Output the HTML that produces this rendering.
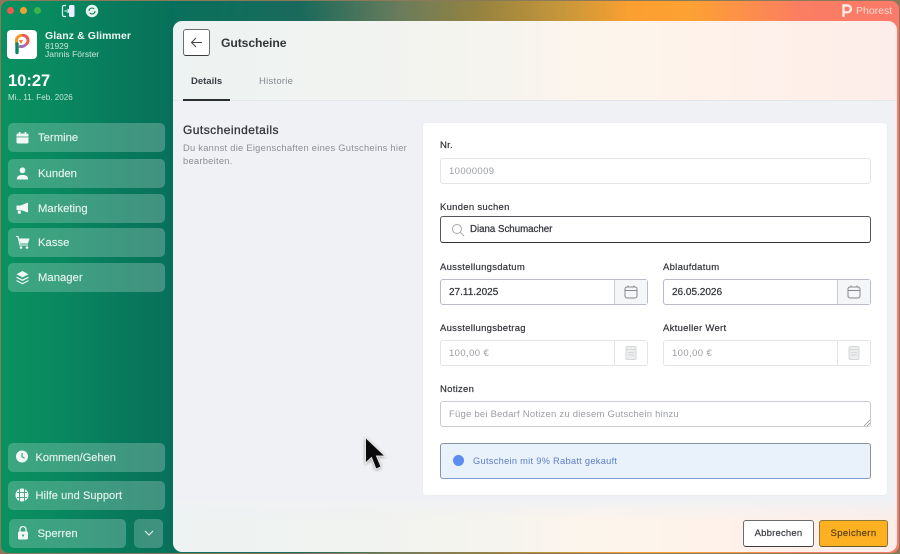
<!DOCTYPE html>
<html lang="de"><head><meta charset="utf-8"><title>Gutscheine</title>
<style>
*{box-sizing:border-box;margin:0;padding:0}
html,body{width:900px;height:554px;overflow:hidden;background:#8a7a5a}
body{font-family:"Liberation Sans",sans-serif;position:relative}
#all{position:absolute;left:0;top:0;width:900px;height:554px;filter:blur(.3px)}
.a{position:absolute;white-space:nowrap}
#win{position:absolute;left:1px;top:1px;width:898px;height:552px;border-radius:8px;overflow:hidden;background:linear-gradient(90deg,#08705c 0,#08705c 172px,#1a6a5c 300px,#6b7c5c 400px,#96833f 480px,#c9973a 565px,#fba030 630px,#fca133 690px,#fb7d62 800px,#fb7a6a 898px)}
#side{position:absolute;left:0;top:0;width:172px;height:552px;background:linear-gradient(90deg,#0a9160 0,#09885f 60px,#087a5c 120px,#08705a 172px)}
.nav{position:absolute;left:7px;width:157px;height:29px;border-radius:5px;background:linear-gradient(90deg,rgba(255,255,255,.2),rgba(255,255,255,.23));color:#e6f3ee;font-size:11.3px;line-height:30px;-webkit-text-stroke:.15px #e6f3ee}
.nav span{position:absolute;left:30px}
.nav svg{position:absolute;left:8px;top:8px}
#panel{position:absolute;left:172px;top:20px;width:724px;height:531px;border-radius:9px;overflow:hidden;background:linear-gradient(90deg,#edf3f2 0,#f1f3f0 200px,#f6f4ee 330px,#fdf5ec 430px,#feefe9 640px,#fdedea 724px)}
#body{position:absolute;left:0;top:79px;width:724px;height:420px;background:#f0f1f4;border-top:1px solid #e4e6ea;-webkit-mask-image:linear-gradient(180deg,#000 0,#000 400px,transparent 420px);mask-image:linear-gradient(180deg,#000 0,#000 400px,transparent 420px)}
#card{position:absolute;left:423px;top:123px;width:464px;height:372px;background:#fff;border-radius:3px;box-shadow:0 0 1px rgba(90,100,130,.15)}
.lab{position:absolute;font-size:9.5px;color:#35373c;white-space:nowrap;letter-spacing:.28px;-webkit-text-stroke:.2px #35373c}
.inp{position:absolute;height:26px;background:#fff;border:1px solid #e2e4e8;border-radius:3px;font-size:9.5px;line-height:25px;padding-left:8px;color:#9a9da3;letter-spacing:.4px;white-space:nowrap}
.dark{color:#34363b;border-color:#b9bccb;font-size:10px;letter-spacing:0;-webkit-text-stroke:.25px #34363b}
.add{position:absolute;right:0;top:0;width:33px;height:24px;border-left:1px solid #c9cbd2;background:#f5f6f8}
.add svg{position:absolute;left:9px;top:5px}
</style></head><body><div id="all">
<div id="win">
<div id="side"></div>
<div class="a" style="left:5.500px;top:5.500px;width:7px;height:7px;border-radius:50%;background:#ef5a50"></div>
<div class="a" style="left:19px;top:5.500px;width:7px;height:7px;border-radius:50%;background:#eda32e"></div>
<div class="a" style="left:32.500px;top:5.500px;width:7px;height:7px;border-radius:50%;background:#3bb54a"></div>
<svg class="a" style="left:60px;top:3px" width="15" height="14" viewBox="0 0 15 14"><path d="M5 1.500H3a1.500 1.500 0 0 0-1.500 1.500v8A1.500 1.500 0 0 0 3 12.500h2" fill="none" stroke="#dff" stroke-width="1.200"/><rect x="8" y="1" width="5.500" height="12" rx="1.500" fill="#eef"/><path d="M3.500 7h5M6.500 5l2 2-2 2" stroke="#dff" stroke-width="1.100" fill="none"/></svg>
<svg class="a" style="left:84px;top:3px" width="14" height="14" viewBox="0 0 14 14"><circle cx="7" cy="7" r="6.200" fill="#e9f5f1"/><path d="M4 7a3 3 0 0 1 5.200-2M10 7a3 3 0 0 1-5.200 2" fill="none" stroke="#0d7f60" stroke-width="1.100"/></svg>
<svg class="a" style="left:841px;top:3px" width="10" height="14" viewBox="0 0 10 14"><path d="M1.500 13V1.500H5.500a3.200 3.200 0 0 1 0 6.800H1.500" fill="none" stroke="#fdeae4" stroke-width="2.400"/></svg>
<div class="a" style="left:855px;top:4px;color:#fbdcd4;font-size:10.500px;line-height:13px">Phorest</div>

<div class="a" style="left:6px;top:28.500px;width:30px;height:29.500px;background:#fff;border-radius:4px"></div>
<svg class="a" style="left:13px;top:33px" width="17" height="21" viewBox="0 0 17 21"><path d="M2.500 11V6.500A5 5 0 0 1 8 1.500" fill="none" stroke="#ef9a2c" stroke-width="3"/><path d="M8 1.500a5 5 0 0 1 6 5c0 2-.8 3.200-2.200 4" fill="none" stroke="#ee5a4f" stroke-width="3"/><path d="M11.800 10.500a5.500 5.500 0 0 1-6.800 1.500" fill="none" stroke="#a56ab8" stroke-width="3"/><path d="M3 10v8.500" stroke="#0c8a5e" stroke-width="3.400" stroke-linecap="round"/><path d="M5 6h4l-2 4z" fill="#ef7a3c"/></svg>
<div class="a" style="left:44px;top:29px;color:#eef7f3;font-size:10.500px;font-weight:700;letter-spacing:.1px;line-height:13px">Glanz &amp; Glimmer</div>
<div class="a" style="left:44px;top:40px;color:#cbe6db;font-size:8.500px;line-height:11px">81929</div>
<div class="a" style="left:44px;top:47.500px;color:#cbe6db;font-size:8.500px;line-height:11px;letter-spacing:.02px">Jannis Förster</div>
<div class="a" style="left:7px;top:70px;color:#fff;font-size:16.500px;font-weight:700;line-height:20px">10:27</div>
<div class="a" style="left:7px;top:90.500px;color:#c6e4d9;font-size:8px;line-height:11px;letter-spacing:.05px">Mi., 11. Feb. 2026</div>

<div class="nav" style="top:122px"><svg width="15" height="15" viewBox="0 0 15 15" fill="#f0f8f5"><rect x=".5" y="2.500" width="12" height="10" rx="1.500"/><rect x="2.800" y="1" width="1.600" height="3"/><rect x="8.600" y="1" width="1.600" height="3"/><rect x=".5" y="5.500" width="12" height=".9" fill="#4fa586"/></svg><span>Termine</span></div>
<div class="nav" style="top:158px"><svg width="15" height="15" viewBox="0 0 15 15" fill="#f0f8f5"><circle cx="6.500" cy="3.300" r="2.900"/><path d="M.8 12.500c0-3.300 2-4.500 5.700-4.500s5.700 1.200 5.700 4.500z"/></svg><span>Kunden</span></div>
<div class="nav" style="top:193px"><svg width="15" height="15" viewBox="0 0 15 15" fill="#f0f8f5"><path d="M.5 3.500h4L12 .5v10L4.500 8H.5z"/><rect x="1.800" y="8.500" width="3" height="3.200"/></svg><span>Marketing</span></div>
<div class="nav" style="top:227px"><svg width="15" height="15" viewBox="0 0 15 15"><path d="M-.5 .5h2.500L4 9h8" fill="none" stroke="#f0f8f5" stroke-width="1.100"/><path d="M3 2.500h10.500l-1.500 5H4.500z" fill="#f0f8f5"/><circle cx="5" cy="11.500" r="1.300" fill="#f0f8f5"/><circle cx="11" cy="11.500" r="1.300" fill="#f0f8f5"/></svg><span>Kasse</span></div>
<div class="nav" style="top:262px"><svg width="15" height="15" viewBox="0 0 15 15" fill="#f0f8f5"><path d="M6.500 0l6 3.200-6 3.200-6-3.200z"/><path d="M.5 5.500l6 3 6-3v1.500l-6 3-6-3z"/><path d="M.5 9l6 3 6-3v1.200l-6 3-6-3z"/></svg><span>Manager</span></div>

<div class="nav" style="top:442px"><svg style="left:8px;top:7px" width="14" height="14" viewBox="0 0 14 14"><circle cx="6" cy="6.500" r="6" fill="#f0f8f5"/><path d="M6 3v3.700l2.500 1.500" fill="none" stroke="#4fa586" stroke-width="1.200"/></svg><span style="left:27.500px;font-size:11px;letter-spacing:.02px">Kommen/Gehen</span></div>
<div class="nav" style="top:480px"><svg style="left:7px;top:7px" width="14" height="14" viewBox="0 0 14 14"><circle cx="7" cy="7" r="6.500" fill="#f0f8f5"/><path d="M2 4.500h10M2 9.500h10M4.500 1v12M9.500 1v12" stroke="#4fa586" stroke-width="1"/></svg><span style="left:27.500px;font-size:11px;letter-spacing:.1px">Hilfe und Support</span></div>
<div class="nav" style="top:517.500px;left:8px;width:117px"><svg style="left:8px;top:7px" width="12" height="14" viewBox="0 0 12 14"><rect x="1" y="5.500" width="10" height="8" rx="1.500" fill="#f0f8f5"/><path d="M3 6V3.500a3 3 0 0 1 6 0V6" fill="none" stroke="#f0f8f5" stroke-width="1.300"/><circle cx="6" cy="9.500" r="1.100" fill="#4fa586"/></svg><span style="left:28.500px">Sperren</span></div>
<div class="nav" style="top:517.500px;left:133px;width:29px"><svg style="left:10px;top:11px" width="10" height="7" viewBox="0 0 10 7"><path d="M1 1l4 4 4-4" fill="none" stroke="#e6f3ee" stroke-width="1.100"/></svg></div>

<div id="panel"><div id="body"></div></div>
</div>

<div class="a" style="left:183px;top:29px;width:27px;height:27px;background:#fff;border:1px solid #6a6c70;border-bottom-color:#3a3c40;border-radius:3px"></div>
<svg class="a" style="left:190px;top:36px" width="13" height="13" viewBox="0 0 13 13"><path d="M12 6.500H1.500M6 2L1.500 6.500 6 11" fill="none" stroke="#44464a" stroke-width="1"/></svg>
<div class="a" style="left:221px;top:36px;color:#33353a;font-size:12.200px;font-weight:700;line-height:15px;letter-spacing:-.1px">Gutscheine</div>
<div class="a" style="left:191px;top:75.500px;color:#3a3c41;font-size:9.500px;font-weight:700;line-height:12px">Details</div>
<div class="a" style="left:183px;top:99px;width:47px;height:2px;background:#2b2d31"></div>
<div class="a" style="left:259px;top:75.500px;color:#85888e;font-size:9.500px;line-height:12px;letter-spacing:.25px">Historie</div>

<div class="a" style="left:183px;top:123px;color:#33353a;font-size:12px;line-height:15px;letter-spacing:.45px;-webkit-text-stroke:.3px #33353a">Gutscheindetails</div>
<div class="a" style="left:183px;top:141.500px;color:#8b8e94;font-size:9.300px;line-height:13px;letter-spacing:.28px;white-space:normal;width:235px">Du kannst die Eigenschaften eines Gutscheins hier bearbeiten.</div>

<div id="card"></div>
<div class="lab" style="left:440px;top:140px">Nr.</div>
<div class="inp" style="left:440px;top:158px;width:431px">10000009</div>
<div class="lab" style="left:440px;top:202px">Kunden suchen</div>
<div class="inp dark" style="left:440px;top:216px;width:431px;height:27px;border-color:#55575c;border-bottom-color:#2f3135;padding-left:29px;line-height:26px;font-size:9.700px">Diana Schumacher</div>
<svg class="a" style="left:451px;top:223px" width="14" height="14" viewBox="0 0 14 14"><circle cx="6" cy="6" r="4.500" fill="none" stroke="#a5a8ad" stroke-width="1"/><path d="M9.300 9.300L13 13" stroke="#a5a8ad" stroke-width="1"/></svg>

<div class="lab" style="left:440px;top:261.500px">Ausstellungsdatum</div>
<div class="inp dark" style="left:440px;top:279px;width:208px">27.11.2025<div class="add"><svg width="14" height="14" viewBox="0 0 14 14" fill="none" stroke="#85888e"><rect x="1" y="2" width="12" height="11" rx="2"/><path d="M1 5.500h12M4 .5v2M10 .5v2"/></svg></div></div>
<div class="lab" style="left:663px;top:261.500px">Ablaufdatum</div>
<div class="inp dark" style="left:663px;top:279px;width:208px">26.05.2026<div class="add"><svg width="14" height="14" viewBox="0 0 14 14" fill="none" stroke="#85888e"><rect x="1" y="2" width="12" height="11" rx="2"/><path d="M1 5.500h12M4 .5v2M10 .5v2"/></svg></div></div>

<div class="lab" style="left:440px;top:322.500px">Ausstellungsbetrag</div>
<div class="inp" style="left:440px;top:340px;width:208px">100,00 €<div class="add" style="background:#fff;border-left-color:#e2e4e8"><svg width="14" height="14" viewBox="0 0 14 14" fill="#eceded" stroke="#d5d7da"><rect x="2" y=".5" width="10" height="13" rx="1.500"/><path d="M2.500 3.500h9M4 6.500h6M4 9h6"/></svg></div></div>
<div class="lab" style="left:663px;top:322.500px">Aktueller Wert</div>
<div class="inp" style="left:663px;top:340px;width:208px">100,00 €<div class="add" style="background:#fff;border-left-color:#e2e4e8"><svg width="14" height="14" viewBox="0 0 14 14" fill="#eceded" stroke="#d5d7da"><rect x="2" y=".5" width="10" height="13" rx="1.500"/><path d="M2.500 3.500h9M4 6.500h6M4 9h6"/></svg></div></div>

<div class="lab" style="left:440px;top:383.500px">Notizen</div>
<div class="inp" style="left:440px;top:401px;width:431px;border-color:#c9cbd2;letter-spacing:.22px">Füge bei Bedarf Notizen zu diesem Gutschein hinzu</div>
<svg class="a" style="left:864px;top:420px" width="6" height="6" viewBox="0 0 6 6"><path d="M0 6L6 0M3 6L6 3" stroke="#9a9da3" stroke-width=".8"/></svg>

<div class="a" style="left:440px;top:443px;width:431px;height:36px;background:#e9f1fa;border:1px solid #8b93a3;border-bottom-color:#7f9bdc;border-radius:3px"></div>
<div class="a" style="left:452.500px;top:455px;width:11px;height:11px;border-radius:50%;background:#5c8df0"></div>
<div class="a" style="left:473px;top:455px;color:#5d7fc6;font-size:9.300px;line-height:13px;letter-spacing:.27px">Gutschein mit 9% Rabatt gekauft</div>

<div class="a" style="left:743px;top:520px;width:71px;height:27px;background:#fff;border:1px solid #6a6c70;border-bottom-color:#3c3e42;border-radius:3px;color:#3a3c41;font-size:9.500px;line-height:26px;text-align:center;letter-spacing:.2px;-webkit-text-stroke:.2px #3a3c41">Abbrechen</div>
<div class="a" style="left:819px;top:520px;width:69px;height:27px;background:#fdb022;border:1px solid #8d7a3a;border-bottom-color:#6d5a25;border-radius:3px;color:#5a4312;font-size:9.500px;line-height:26px;text-align:center;letter-spacing:.35px;-webkit-text-stroke:.2px #5a4312">Speichern</div>

<svg class="a" style="left:363px;top:436px;filter:drop-shadow(0 1px 1.500px rgba(0,0,0,.35))" width="24" height="36" viewBox="0 0 24 36"><path d="M2.500 1.500V27l6-5.500 4.500 11.500 5-2.200-4.500-10.800h8.500z" fill="#0a0a0c" stroke="#fff" stroke-width="1" stroke-opacity=".8"/></svg>
</div></body></html>
